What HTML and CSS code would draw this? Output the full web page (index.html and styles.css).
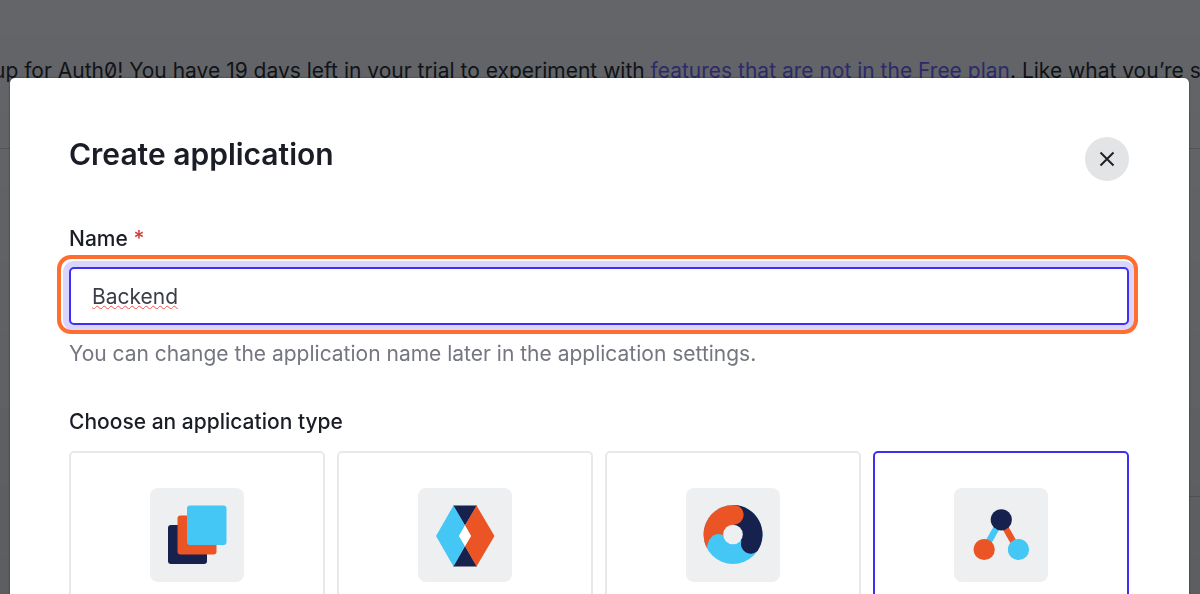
FILE: index.html
```html
<!DOCTYPE html>
<html lang="en">
<head>
<meta charset="utf-8">
<meta name="viewport" content="width=device-width, initial-scale=1">
<title>Create application</title>
<link rel="stylesheet" href="styles.css">
</head>
<body>
<div class="page">
  <p class="trial-banner">up for Auth0! You have 19 days left in your trial to experiment with <a class="trial-link" href="#">features that are not in the Free plan</a>. Like what you’re seeing?</p>
  <div class="page-section"></div>
  <div class="page-section page-section-side"></div>
</div>
<div class="backdrop">
  <div class="dialog" role="dialog" aria-modal="true" aria-labelledby="dialog-title">
    <header class="dialog-header">
      <h1 class="dialog-title" id="dialog-title">Create application</h1>
      <button class="close-button" type="button" aria-label="Close">
        <svg class="close-icon" viewBox="0 0 16 16" aria-hidden="true"><path d="M1.500 1.500l13 13M14.500 1.500l-13 13"/></svg>
      </button>
    </header>
    <form class="form">
      <div class="field">
        <label class="label" for="app-name">Name <span class="required">*</span></label>
        <div class="input-wrap">
          <input class="text-input" id="app-name" type="text" value="Backend" spellcheck="false" aria-describedby="name-hint">
          <span class="highlight" aria-hidden="true"></span>
        </div>
        <p class="hint" id="name-hint">You can change the application name later in the application settings.</p>
      </div>
      <h2 class="label type-heading" id="type-label">Choose an application type</h2>
      <div class="type-grid" role="group" aria-labelledby="type-label">
        <button class="type-card" type="button" aria-label="Native">
          <span class="tile"><svg class="tile-icon" viewBox="0 0 94 94" aria-hidden="true">
            <rect x="18" y="37" width="39" height="39" rx="3" fill="#16214d"/>
            <rect x="27.500" y="27.500" width="39" height="39" rx="3" fill="#eb5424"/>
            <rect x="37" y="17.500" width="39.500" height="39.500" rx="3" fill="#44c7f4"/>
          </svg></span>
        </button>
        <button class="type-card" type="button" aria-label="Single page web">
          <span class="tile"><svg class="tile-icon" viewBox="0 0 94 94" aria-hidden="true">
            <path d="M35 17.500H59L47 37.500zM35 78.500H59L47 58z" fill="#16214d"/>
            <path d="M35.500 17.500L47 37.500L41 48L47 58L35.500 78.500L18 48z" fill="#44c7f4"/>
            <path d="M58.500 17.500L47 37.500L53 48L47 58L58.500 78.500L76.500 48z" fill="#eb5424"/>
            <path d="M47 37.500L53 48L47 58L41 48z" fill="#fff"/>
          </svg></span>
        </button>
        <button class="type-card" type="button" aria-label="Regular web">
          <span class="tile"><svg class="tile-icon" viewBox="0 0 94 94" aria-hidden="true">
            <circle cx="47" cy="46.500" r="29.500" fill="#44c7f4"/>
            <path d="M47 17A29.500 29.500 0 0 1 71.500 63A9.700 9.700 0 0 1 55.500 53L47 46.500z" fill="#16214d"/>
            <path d="M20.800 60A29.500 29.500 0 0 1 50 17.200C58 19 60 29 54.500 34Q51.500 36.800 47 37V46.500L38 48C33 44 23 45.500 20.800 60z" fill="#eb5424"/>
            <circle cx="47" cy="46.500" r="9.800" fill="#eeeff1"/>
          </svg></span>
        </button>
        <button class="type-card type-card-selected" type="button" aria-label="Machine to machine" aria-pressed="true">
          <span class="tile"><svg class="tile-icon" viewBox="0 0 94 94" aria-hidden="true">
            <path d="M47 32L30 62" stroke="#44c7f4" stroke-width="6.500"/>
            <path d="M47 32L64 62" stroke="#eb5424" stroke-width="6.500"/>
            <circle cx="47.300" cy="31.800" r="10.600" fill="#16214d"/>
            <circle cx="30.200" cy="61.500" r="10.600" fill="#eb5424"/>
            <circle cx="64.500" cy="61.500" r="10.600" fill="#44c7f4"/>
          </svg></span>
        </button>
      </div>
    </form>
  </div>
</div>
</body>
</html>
```
FILE: styles.css
```css
* { box-sizing: border-box; }

body {
  margin: 0;
  height: 100vh;
  overflow: hidden;
  font-family: Inter, "Liberation Sans", sans-serif;
  color: #1a1c26;
  background: #fff;
}

.page { padding-top: 58px; }

.trial-banner {
  margin: 0 0 64px -7px;
  font-size: 21px;
  line-height: 26px;
  white-space: nowrap;
  font-feature-settings: "zero";
}

.trial-link { color: #6a5cff; text-decoration: none; }

.page-section { height: 348px; border-top: 1px solid #d3d4d6; }
.page-section-side { margin-left: 50%; }

.backdrop {
  position: fixed;
  inset: 0;
  padding: 78px 11px 0 10px;
  overflow: hidden;
  background: linear-gradient(rgba(12, 14, 20, 0.64), rgba(12, 14, 20, 0.67));
}

.dialog {
  min-height: 100%;
  padding: 59px 60px 60px 59px;
  border-radius: 5px;
  background: #fff;
  box-shadow: 0 0 2px rgba(0, 0, 0, 0.6);
}

.dialog-header {
  display: flex;
  justify-content: space-between;
  align-items: flex-start;
  margin-bottom: 44px;
}

.dialog-title {
  margin: 0;
  font-size: 30px;
  line-height: 34px;
  font-weight: 600;
}

.close-button {
  display: grid;
  place-items: center;
  width: 44px;
  height: 44px;
  padding: 0;
  border: 0;
  border-radius: 50%;
  background: #e3e4e6;
}

.close-icon { width: 16px; height: 16px; fill: none; stroke: #1e212a; stroke-width: 2; }

.field { margin-bottom: 40px; }

.label {
  display: block;
  margin: 0;
  font-size: 21px;
  line-height: 28px;
  font-weight: 500;
}

.required { color: #d03c38; }

.input-wrap { position: relative; margin: 14px 0 15px; }

.text-input {
  display: block;
  width: 100%;
  height: 58px;
  padding: 0 21px;
  border: 2px solid #3f2ff5;
  border-radius: 5px;
  outline: 0;
  box-shadow: 0 0 0 6px #d9d5fc;
  background: #fff;
  color: #3b3e47;
  font: 21px/28px Inter, "Liberation Sans", sans-serif;
  text-decoration: underline wavy #f2544f 1px;
}

.highlight {
  position: absolute;
  inset: -12px -9px -9px -12px;
  border: 4px solid #ff6d2f;
  border-radius: 14px;
  pointer-events: none;
}

.hint { margin: 0; font-size: 21px; line-height: 28px; color: #747780; }

.type-heading { margin-bottom: 15px; }

.type-grid { display: grid; grid-template-columns: repeat(4, 1fr); gap: 12px; }

.type-card {
  display: flex;
  justify-content: center;
  align-items: flex-start;
  height: 280px;
  padding: 35px 0 0;
  border: 2px solid #e8e8ea;
  border-radius: 5px;
  background: #fff;
}

.type-card-selected { border-color: #3f2ff5; }

.tile { display: block; width: 94px; height: 94px; border-radius: 8px; background: #eeeff1; }
.tile-icon { display: block; width: 100%; height: 100%; }
```
